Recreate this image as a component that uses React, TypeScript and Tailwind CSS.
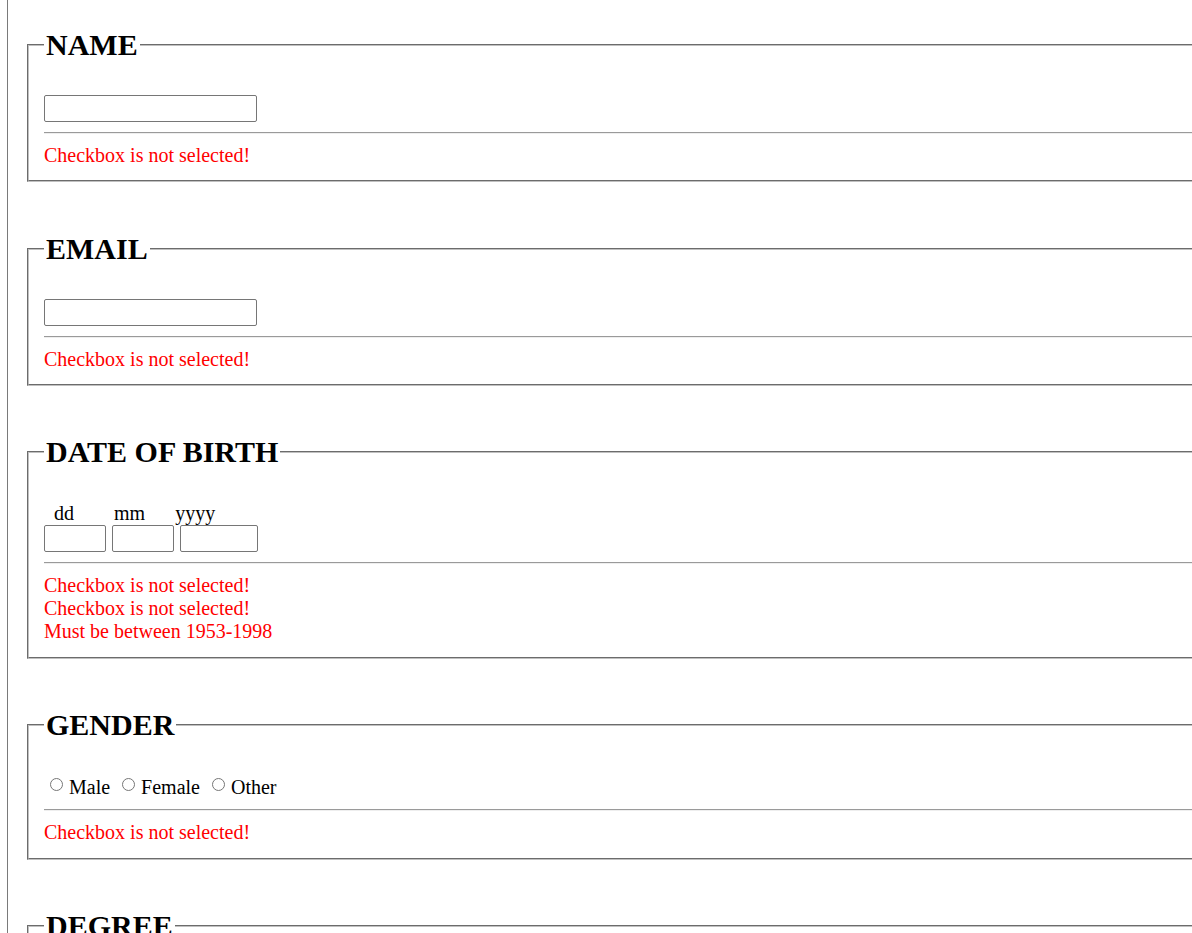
import React from "react";

const serif = { fontFamily: '"Liberation Serif", "Times New Roman", serif' };

function Field({
  title,
  children,
  errors,
  mt,
  extra,
}: {
  title: string;
  children: React.ReactNode;
  errors: string[];
  mt: string;
  extra?: string;
}) {
  return (
    <fieldset
      className={`${mt} w-[1400px] border-2 [border-style:groove] border-[#c0c0c0] px-[15px] pt-0 pb-[12.5px]`}
    >
      <legend className="px-[2px] text-[30px] font-bold leading-[34.5px] text-black">
        {title}
      </legend>
      <div className="mt-[32.5px]">{children}</div>
      <hr className="my-[10px] h-0 border-t border-b border-t-[#9a9a9a] border-b-[#eeeeee]" />
      <div className={`text-[20px] leading-[23px] text-[#ff0000] ${extra ?? ""}`}>
        {errors.map((e, i) => (
          <div key={i}>{e}</div>
        ))}
      </div>
    </fieldset>
  );
}

function TextBox({ w }: { w: string }) {
  return (
    <div
      className={`${w} h-[27px] rounded-[2px] border border-[#767676] bg-white`}
    />
  );
}

function Radio({ label, first }: { label: string; first?: boolean }) {
  return (
    <>
      <span
        className={`inline-block h-[13px] w-[13px] rounded-full border border-[#767676] bg-white align-baseline mb-[3px] ${
          first ? "ml-[6px]" : "ml-[12px]"
        } mr-[6px]`}
      />
      <span>{label}</span>
    </>
  );
}

export default function App() {
  return (
    <div className="w-full overflow-hidden bg-white text-black" style={serif}>
      <div className="ml-[7px] min-h-[1100px] border-l border-[#7a7a7a] pl-[19px] pt-[28px] pb-[40px] text-[20px] leading-[23px]">
        <Field mt="mt-0" title="NAME" errors={["Checkbox is not selected!"]}>
          <TextBox w="w-[213px]" />
        </Field>

        <Field mt="mt-[50.5px]" title="EMAIL" errors={["Checkbox is not selected!"]}>
          <TextBox w="w-[213px]" />
        </Field>

        <Field
          mt="mt-[49.5px]"
          title="DATE OF BIRTH"
          extra="pb-[1px]"
          errors={[
            "Checkbox is not selected!",
            "Checkbox is not selected!",
            "Must be between 1953-1998",
          ]}
        >
          <div className="flex h-[23px] leading-[23px]">
            <span className="ml-[10px]">dd</span>
            <span className="ml-[40px]">mm</span>
            <span className="ml-[30px]">yyyy</span>
          </div>
          <div className="flex gap-[6px]">
            <TextBox w="w-[62px]" />
            <TextBox w="w-[62px]" />
            <TextBox w="w-[78px]" />
          </div>
        </Field>

        <Field
          mt="mt-[49.5px]"
          title="GENDER"
          extra="pb-[1px]"
          errors={["Checkbox is not selected!"]}
        >
          <div className="h-[24px] pt-[1px] leading-[23px]">
            <Radio first label="Male" />
            <Radio label="Female" />
            <Radio label="Other" />
          </div>
        </Field>

        <Field mt="mt-[49.5px]" title="DEGREE" errors={["Checkbox is not selected!"]}>
          <TextBox w="w-[213px]" />
        </Field>
      </div>
    </div>
  );
}
